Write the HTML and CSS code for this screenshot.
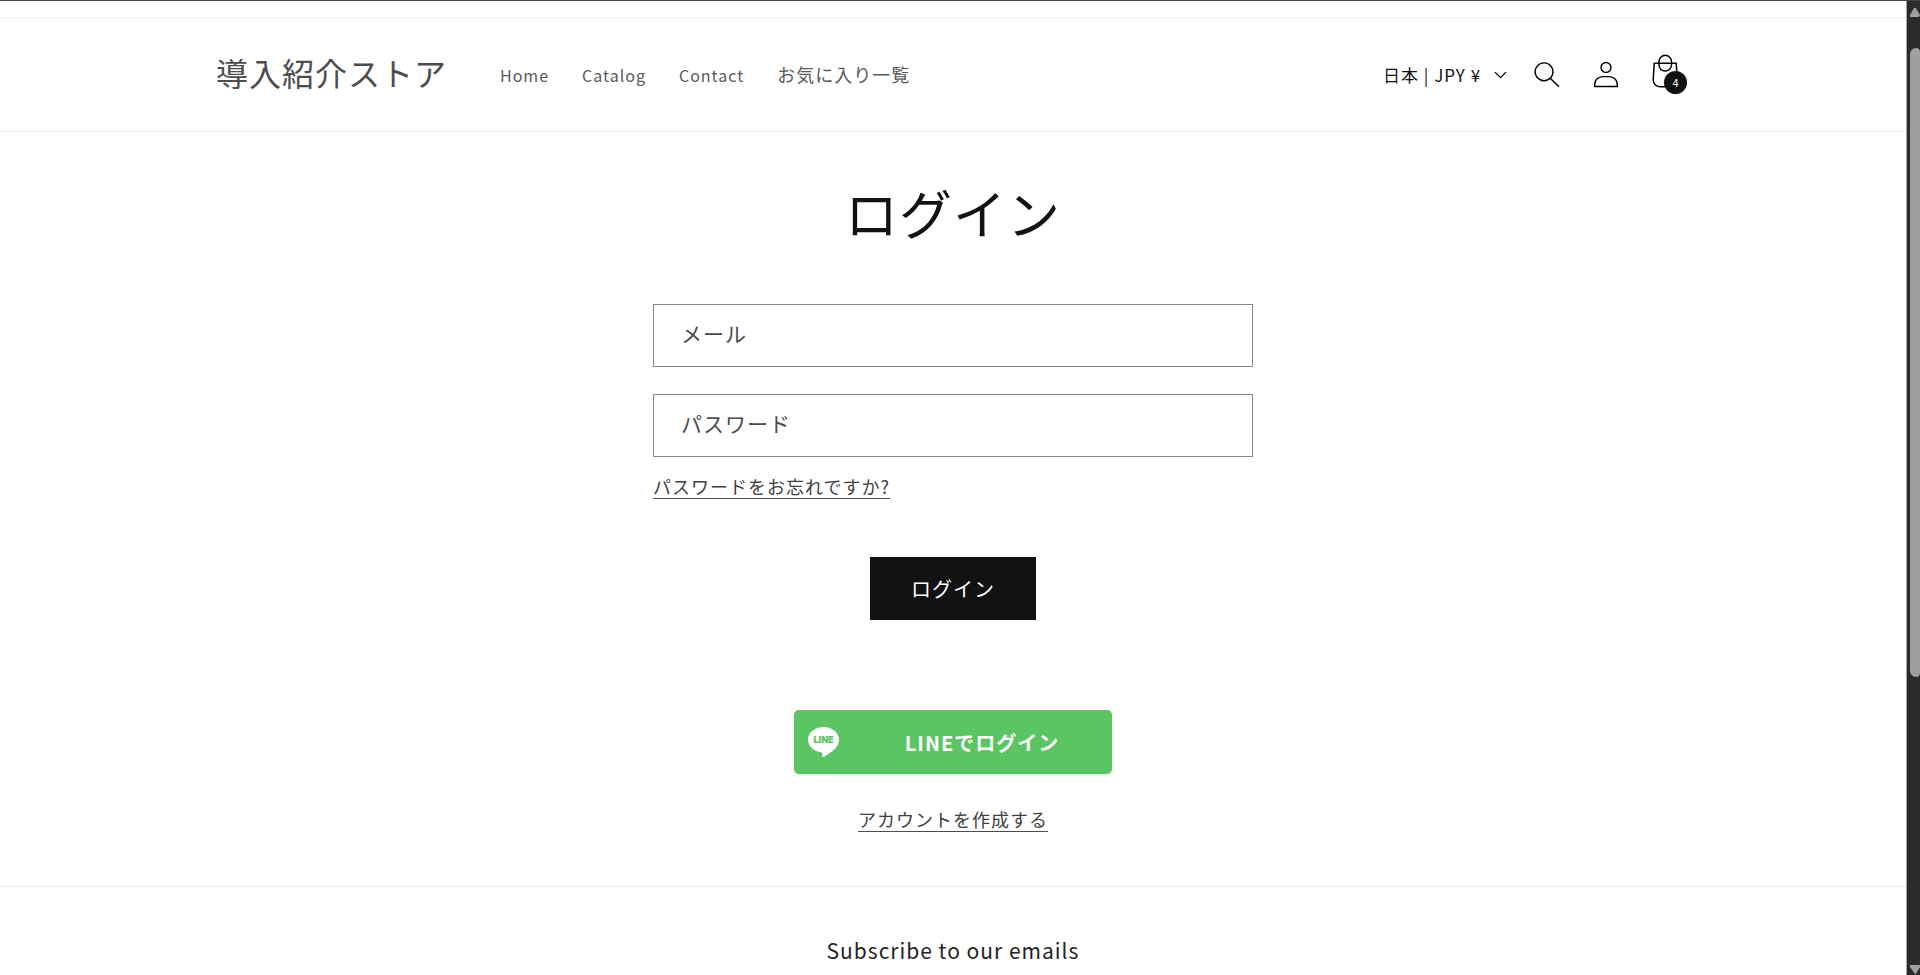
FILE: index.html
```
<!DOCTYPE html>
<html lang="ja">
<head>
  <meta charset="UTF-8">
  <meta name="viewport" content="width=device-width, initial-scale=1.0">
  <title>ログイン - 導入紹介ストア</title>
  <link rel="stylesheet" href="styles.css">
</head>
<body>
  <div class="page">
    <div class="announcement"></div>

    <!-- Header -->
    <header class="header">
      <div class="header-inner">
        <a class="logo" href="#">導入紹介ストア</a>

        <nav class="menu">
          <a href="#">Home</a>
          <a href="#">Catalog</a>
          <a href="#">Contact</a>
          <a class="menu-ja" href="#">お気に入り一覧</a>
        </nav>

        <div class="locale">
          <select class="locale-select" aria-label="国/地域">
            <option>日本 | JPY ¥</option>
          </select>
          <svg class="caret" viewBox="0 0 10 6" aria-hidden="true">
            <path d="M9.354.646a.5.5 0 00-.708 0L5 4.293 1.354.646a.5.5 0 00-.708.708l4 4a.5.5 0 00.708 0l4-4a.5.5 0 000-.708z"/>
          </svg>
        </div>

        <div class="icons">
          <button class="icon-btn" type="button" aria-label="検索">
            <svg class="icon" viewBox="0 0 18 19">
              <path fill-rule="evenodd" d="M11.03 11.68A5.784 5.784 0 112.85 3.5a5.784 5.784 0 018.18 8.18zm.26 1.12a6.78 6.78 0 11.72-.7l5.4 5.4a.5.5 0 11-.71.7l-5.41-5.4z"/>
            </svg>
          </button>
          <a class="icon-btn" href="#" aria-label="アカウント">
            <svg class="icon" viewBox="0 0 18 19">
              <path fill-rule="evenodd" d="M6 4.5a3 3 0 116 0 3 3 0 01-6 0zm3-4a4 4 0 100 8 4 4 0 000-8zm5.58 12.15c1.12.82 1.83 2.24 1.91 4.85H1.51c.08-2.6.79-4.03 1.9-4.85C4.66 11.75 6.5 11.5 9 11.5s4.35.26 5.58 1.15zM9 10.5c-2.5 0-4.65.24-6.17 1.35C1.27 12.98.5 14.93.5 18v.5h17V18c0-3.07-.77-5.02-2.33-6.15-1.52-1.1-3.67-1.35-6.17-1.35z"/>
            </svg>
          </a>
          <a class="icon-btn" href="#" aria-label="カート">
            <svg class="icon-cart" viewBox="0 0 40 40">
              <path fill-rule="evenodd" d="M20.5 6.5a4.75 4.75 0 00-4.75 4.75v.56h-3.16l-.77 11.6a5 5 0 004.99 5.34h7.38a5 5 0 004.99-5.33l-.78-11.61h-3.15v-.57a4.75 4.75 0 00-4.75-4.74zm3.75 5.31v-.56a3.75 3.75 0 10-7.5 0v.56h7.5zm-7.5 1h7.5v.56a3.75 3.75 0 11-7.5 0v-.56zm-1 0v.56a4.75 4.75 0 109.5 0v-.56h2.22l.71 10.67a4 4 0 01-3.99 4.27h-7.38a4 4 0 01-4-4.27l.72-10.67h2.22z"/>
            </svg>
            <span class="badge">4</span>
          </a>
        </div>
      </div>
    </header>

    <!-- Login form -->
    <main class="login">
      <h1>ログイン</h1>
      <form class="login-form">
        <input class="field" type="email" placeholder="メール" aria-label="メール">
        <input class="field" type="password" placeholder="パスワード" aria-label="パスワード">
        <a class="link forgot" href="#">パスワードをお忘れですか?</a>
        <button class="submit" type="submit">ログイン</button>
        <button class="line-btn" type="button">
          <svg class="line-icon" viewBox="0 0 32 32" aria-hidden="true">
            <path fill="#fff" d="M16 1C7.400 1 .500 6.600 .500 13.700c0 6.300 5.500 11.500 13 12.500 1.500.300 1.600 1 1.400 2.200l-.3 1.800c0 .8.400 1.100 1.200.700 3.700-1.700 10.200-6.200 13.200-10C30.700 18.800 31.500 16.300 31.500 13.700 31.500 6.600 24.600 1 16 1z"/>
            <text class="line-mark" x="16" y="17" text-anchor="middle">LINE</text>
          </svg>
          <span class="line-label">LINEでログイン</span>
        </button>
        <a class="link" href="#">アカウントを作成する</a>
      </form>
    </main>

    <!-- Footer -->
    <footer class="footer">
      <h2>Subscribe to our emails</h2>
    </footer>
  </div>

  <!-- Scrollbar -->
  <div class="scrollbar" aria-hidden="true">
    <svg class="arrow" viewBox="0 0 10 10"><path d="M5 0L10 8Q10 10 8 10H1Q-1 10 0 8L4 1Q5 0 6 1L10 7z"/></svg>
    <div class="thumb"></div>
    <svg class="arrow arrow-down" viewBox="0 0 10 10"><path d="M0 0H10V2L6 9H5L0 2z"/></svg>
  </div>
</body>
</html>
```
FILE: styles.css
```
* {
  margin: 0;
  padding: 0;
  box-sizing: border-box;
}

body {
  display: flex;
  height: 100vh;
  overflow: hidden;
  border-top: 1px solid #4a4638;
  background-color: #fff;
  color: #121212;
  font-family: "Noto Sans CJK JP", sans-serif;
  letter-spacing: 1px;
}

a {
  color: inherit;
  text-decoration: none;
}

button,
input,
select {
  font-family: inherit;
  letter-spacing: inherit;
}

.page {
  flex: 1;
  min-width: 0;
  overflow: hidden;
}

.announcement {
  height: 17px;
  border-bottom: 1px solid #efefef;
}

/* Header */
.header {
  border-bottom: 1px solid #efefef;
}

.header-inner {
  display: flex;
  align-items: center;
  max-width: 1482px;
  height: 113px;
  margin: 0 auto;
}

.logo {
  padding: 0 53px 6px 4px;
  font-size: 32px;
  line-height: 48px;
  color: #4d4d4d;
}

.menu {
  display: flex;
  flex: 1;
  align-items: baseline;
  gap: 33px;
  padding-bottom: 1px;
  font-size: 16px;
  line-height: 28px;
  color: #595959;
}

.menu-ja {
  font-size: 18px;
}

.locale {
  display: flex;
  align-items: center;
  gap: 12px;
  margin-right: 10px;
}

.locale-select {
  appearance: none;
  border: none;
  background: none;
  color: #121212;
  font-size: 17px;
  line-height: 28px;
}

.caret {
  width: 13px;
  height: 8px;
}

.icons {
  display: flex;
}

.icon-btn {
  position: relative;
  display: flex;
  justify-content: center;
  align-items: center;
  width: 59px;
  height: 59px;
  border: none;
  background: none;
  cursor: pointer;
}

.icon {
  width: 26px;
  height: 27px;
}

.icon-cart {
  width: 59px;
  height: 59px;
}

.badge {
  position: absolute;
  left: 29px;
  bottom: 10px;
  width: 23px;
  height: 23px;
  border-radius: 50%;
  background-color: #121212;
  color: #fff;
  font-size: 11px;
  line-height: 23px;
  letter-spacing: 0;
  text-align: center;
}

/* Login form */
.login {
  max-width: 600px;
  margin: 0 auto;
  padding: 45px 0 54px;
  text-align: center;
}

h1 {
  margin-bottom: 57px;
  font-size: 53px;
  font-weight: 400;
  line-height: 70px;
}

.login-form {
  display: flex;
  flex-direction: column;
  align-items: center;
}

.field {
  width: 100%;
  height: 63px;
  margin-bottom: 27px;
  padding: 0 27px 5px;
  border: 1px solid #888;
  background-color: #fff;
  color: #121212;
  font-size: 21px;
}

.field::placeholder {
  color: #4d4d4d;
  opacity: 1;
}

.link {
  border-bottom: 1px solid #4d4d4d;
  color: #404040;
  font-size: 18px;
  line-height: 24px;
}

.forgot {
  align-self: flex-start;
  margin-top: -10px;
}

.submit {
  width: 166px;
  height: 63px;
  margin: 58px 0 90px;
  border: none;
  background-color: #121212;
  color: #fff;
  font-size: 20px;
  cursor: pointer;
}

.line-btn {
  display: flex;
  align-items: center;
  width: 318px;
  height: 64px;
  margin-bottom: 33px;
  padding: 0 13px;
  border: none;
  border-radius: 5px;
  background-color: #5bc463;
  box-shadow: 0 1px 3px rgba(0, 0, 0, 0.1);
  color: #fff;
  cursor: pointer;
}

.line-icon {
  width: 33px;
  height: 32px;
}

.line-mark {
  fill: #5bc463;
  font-family: Inter, sans-serif;
  font-size: 9px;
  font-weight: 900;
  letter-spacing: 0;
}

.line-label {
  flex: 1;
  padding-left: 25px;
  font-size: 20px;
  font-weight: 700;
}

/* Footer */
.footer {
  padding: 45px 0;
  border-top: 1px solid #e8e8e8;
  text-align: center;
}

h2 {
  color: #242424;
  font-size: 21px;
  font-weight: 400;
  line-height: 36px;
}

/* Scrollbar */
.scrollbar {
  display: flex;
  flex-direction: column;
  width: 14px;
  padding: 6px 0 0 3px;
  border-left: 1px solid #a8a8a8;
  background-color: #2b2b2b;
}

.arrow {
  width: 10px;
  height: 10px;
  fill: #9f9f9f;
}

.arrow-down {
  margin-top: auto;
}

.thumb {
  height: 65%;
  margin-top: 31px;
  border-radius: 6px 4px 4px 6px;
  background-color: #9f9f9f;
}
```
